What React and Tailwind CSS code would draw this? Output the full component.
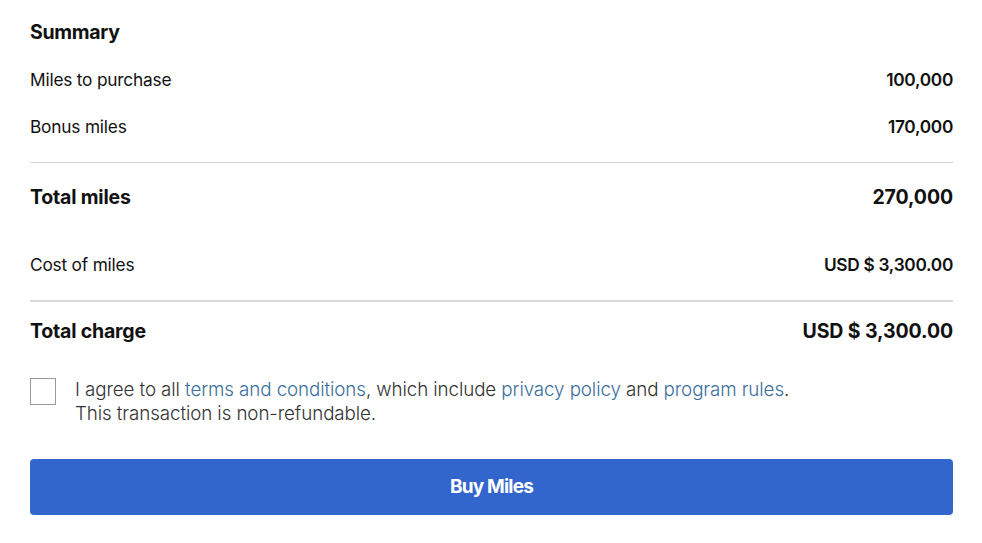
import React from "react";

function Row({ label, value, bold, className }) {
  return (
    <div className={`flex items-center justify-between ${className || ""}`}>
      <span className={bold ? "font-bold text-[19.5px] tracking-[-0.2px]" : "text-[17.3px] tracking-[-0.2px]"}>{label}</span>
      <span className={bold ? "font-bold text-[19.5px] tracking-[-0.1px]" : "font-semibold text-[17.3px] tracking-[-0.3px]"}>{value}</span>
    </div>
  );
}

export default function App() {
  return (
    <div className="w-[982px] h-[543px] bg-white text-[#111] px-[30px] pr-[29px]" style={{ fontFamily: "Inter, 'Liberation Sans', sans-serif" }}>
      <div className="pt-[19px]">
        <div className="h-6 leading-6 font-bold text-[19.5px] tracking-[-0.3px] mt-[1px]">Summary</div>
        <Row className="mt-[24px] h-6" label="Miles to purchase" value="100,000" />
        <Row className="mt-[23px] h-6" label="Bonus miles" value="170,000" />
        <div className="mt-[23px] h-px bg-[#d4d4d4]" />
        <Row className="mt-[21px] h-7" label="Total miles" value="270,000" bold />
        <Row className="mt-[41px] h-6" label="Cost of miles" value="USD $ 3,300.00" />
        <div className="mt-[23px] h-[2px] bg-[#d9d9d9]" />
        <Row className="mt-[18px] h-6" label="Total charge" value="USD $ 3,300.00" bold />
        <div className="mt-[34px] flex items-start">
          <div className="w-[26px] h-[27px] border border-[#9a9a9a] bg-white shrink-0" />
          <div className="ml-[19px] text-[18.8px] leading-6 text-[#333] font-light tracking-[-0.1px]">
            <div>
              I agree to all <span className="text-[#3a6e9e]">terms and conditions</span>, which include{" "}
              <span className="text-[#3a6e9e]">privacy policy</span> and <span className="text-[#3a6e9e]">program rules</span>.
            </div>
            <div>This transaction is non-refundable.</div>
          </div>
        </div>
        <button className="mt-[33px] w-full h-[56px] rounded-[4px] bg-[#3366cc] text-white font-bold text-[19px] tracking-[-0.8px]">
          Buy Miles
        </button>
      </div>
    </div>
  );
}
